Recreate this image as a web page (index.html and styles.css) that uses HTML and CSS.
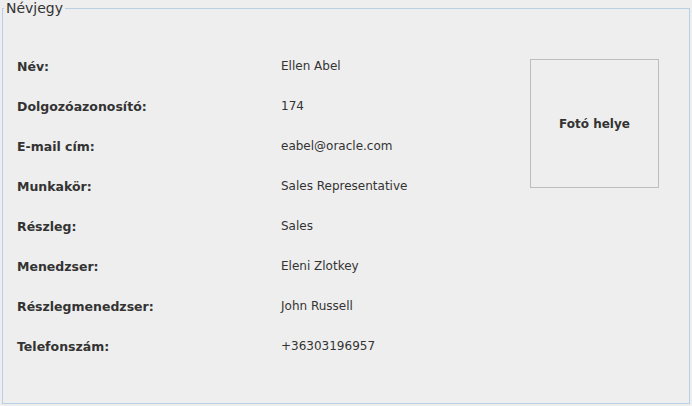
FILE: index.html
```html
<!DOCTYPE html>
<html lang="hu">
<head>
<meta charset="utf-8">
<title>Névjegy</title>
<link rel="stylesheet" href="styles.css">
</head>
<body>
<fieldset class="card">
  <legend class="card-title">Névjegy</legend>
  <div class="card-body">
    <dl class="details">
      <dt>Név:</dt><dd>Ellen Abel</dd>
      <dt>Dolgozóazonosító:</dt><dd>174</dd>
      <dt>E-mail cím:</dt><dd>eabel@oracle.com</dd>
      <dt>Munkakör:</dt><dd>Sales Representative</dd>
      <dt>Részleg:</dt><dd>Sales</dd>
      <dt>Menedzser:</dt><dd>Eleni Zlotkey</dd>
      <dt>Részlegmenedzser:</dt><dd>John Russell</dd>
      <dt>Telefonszám:</dt><dd>+36303196957</dd>
    </dl>
    <div class="photo">Fotó helye</div>
  </div>
</fieldset>
</body>
</html>
```
FILE: styles.css
```css
html, body {
  margin: 0;
  padding: 0;
  background: #eeeeee;
}
body {
  width: 692px;
  height: 406px;
  font-family: "DejaVu Sans", sans-serif;
  color: #333333;
  overflow: hidden;
}
.card {
  box-sizing: border-box;
  margin: 0 2px 0 2px;
  width: 688px;
  height: 404px;
  padding: 0;
  border: 1px solid #b8cfe5;
  min-width: 0;
}
.card-title {
  margin-left: 1px;
  padding: 0 2px;
  font-size: 14px;
  line-height: 16px;
  color: #333333;
}
.card-body {
  display: flex;
  padding: 30px 0 0 14px;
}
.details {
  margin: 0;
  display: grid;
  grid-template-columns: 264px 249px;
  grid-auto-rows: 40px;
  align-items: center;
}
.details dt {
  font-weight: bold;
  font-size: 12.5px;
}
.details dd {
  margin: 0;
  font-size: 12px;
}
.photo {
  box-sizing: border-box;
  margin-top: 13px;
  width: 129px;
  height: 129px;
  border: 1px solid #bdbdbd;
  display: flex;
  align-items: center;
  justify-content: center;
  font-weight: bold;
  font-size: 12px;
}
```
